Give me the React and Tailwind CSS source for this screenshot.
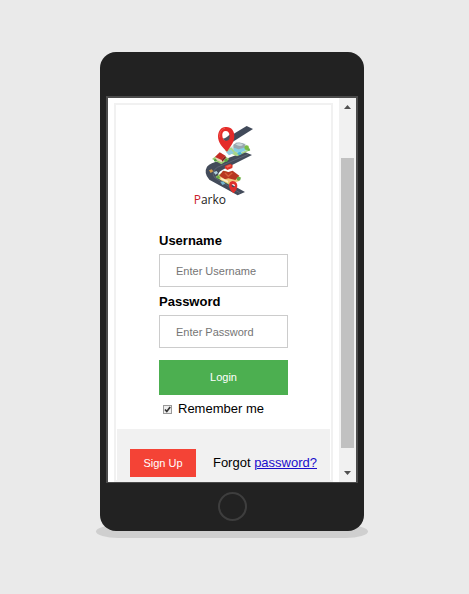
function Logo() {
  return (
    <svg className="mx-auto block h-[100px] w-[80px]" viewBox="-4 0 240 300" role="img" aria-label="Parko">
      <path d="M184 33 L203 42 L138 83 L118 73 Z" fill="#414a5a" />
      <path d="M178 111 L200 120 L112 164 Q92 174 102 188 L179 231 L157 241 L72 194 Q54 174 65 155 Q76 143 102 139 Z" fill="#434b5a" />
      <path d="M188 118 L96 157 Q76 170 88 188 L164 234" fill="none" stroke="#687080" strokeWidth="2" />
      <path d="M118 107 L149 90 L196 105 L155 124 Z" fill="#a9d68a" />
      <path d="M137 97 L153 81 L181 86 L190 102 L160 117 Z" fill="#d7e3e6" />
      <path d="M144 89 Q160 76 179 88 L178 103 Q160 112 145 103 Z" fill="#98a6ae" />
      <path d="M150 88 Q162 81 174 89 Q164 97 150 88" fill="#c8d6da" />
      <path d="M146 98 L160 103 L181 97 V106 L161 115 L146 108 Z" fill="#83cee3" />
      <circle cx="184" cy="98" r="7" fill="#79bd42" />
      <circle cx="190" cy="104" r="4" fill="#6db64a" />
      <path d="M122 111 L137 104 L146 114 L131 121 Z" fill="#8fcbe0" />
      <path d="M155 114 L165 110 L170 116 L161 121 Z" fill="#46b5d7" />
      <path d="M80 132 L105 113 L132 132 L108 148 Z" fill="#9aca70" />
      <path d="M90 125 L105 114 L121 123 V136 L108 142 L92 134 Z" fill="#e9d5bb" />
      <path d="M89 126 L103 112 L120 122 L109 135 Z" fill="#c52b25" />
      <path d="M109 135 L120 122 L122 129 L111 140 Z" fill="#7e211e" />
      <circle cx="90" cy="136" r="4" fill="#4e9c43" />
      <circle cx="122" cy="136" r="5" fill="#56a33f" />
      <path d="M90 186 L118 167 L168 188 L134 211 Z" fill="#9bcc62" />
      <path d="M102 183 L122 171 L162 184 V198 L133 208 L104 194 Z" fill="#f0c77b" />
      <path d="M102 182 L113 167 L129 171 L142 167 L162 182 L150 195 L129 190 L119 193 Z" fill="#b83822" />
      <path d="M119 174 L129 184 L141 173" fill="none" stroke="#d5603a" strokeWidth="4" />
      <path d="M107 188 L128 197 V203 L108 194 Z" fill="#fff0c5" />
      <circle cx="160" cy="191" r="6" fill="#62a844" />
      <circle cx="99" cy="187" r="4" fill="#65ad42" />
      <path d="M71 166 L79 163 L84 169 L76 174 Z" fill="#d49a45" />
      <path d="M85 171 L94 168 L98 174 L90 179 Z" fill="#b2d2de" />
      <path d="M105 201 L114 199 L120 206 L111 210 Z" fill="#74b4cc" />
      <path d="M118 153 L135 146 L142 151 L141 159 L126 165 L119 160 Z" fill="#db3329" />
      <path d="M122 153 L135 149 L138 153 L126 158 Z" fill="#ef6a5c" />
      <path d="M111 70 Q121 72 135 56 Q136 75 125 79 Q117 80 111 70" fill="#4b5260" />
      <path fillRule="evenodd" d="M120 36 C137 34 148 47 147 65 C146 83 134 96 125 110 C111 97 98 83 98 64 C99 47 107 37 120 36 Z M121 48 C113 48 110 54 111 63 C112 73 117 78 124 77 C131 76 134 70 133 62 C132 53 128 48 121 48 Z" fill="#e42b29" />
      <path d="M103 66 C102 52 108 42 118 40" fill="none" stroke="#f6554d" strokeWidth="3" strokeLinecap="round" />
      <path fillRule="evenodd" d="M142 198 Q156 199 156 213 Q156 224 145 235 Q131 223 131 212 Q131 199 142 198 Z M143 207 Q138 208 139 213 Q140 217 145 217 Q149 216 149 212 Q148 207 143 207 Z" fill="#df302c" />
      <text x="25" y="267" fontSize="36" className="font-['Open_Sans',sans-serif]">
        <tspan fill="#c9202b">P</tspan>
        <tspan fill="#1c1c1c">arko</tspan>
      </text>
    </svg>
  );
}

function Field({ id, label, type, placeholder }) {
  return (
    <div>
      <label htmlFor={id} className="block h-5 text-[13px] leading-[14px] font-bold">{label}</label>
      <input
        id={id}
        type={type}
        placeholder={placeholder}
        className="mb-2 block h-[33px] w-full border border-[#ccc] bg-white px-4 text-[11px] outline-none placeholder:text-[#757575]"
      />
    </div>
  );
}

function ScrollBar() {
  return (
    <div className="flex w-[17px] shrink-0 flex-col items-center bg-[#f1f1f1]" aria-hidden="true">
      <svg className="h-[17px] w-[17px] shrink-0" viewBox="0 0 17 17"><path d="M5 11 L8.5 7 L12 11 Z" fill="#505050" /></svg>
      <div className="h-[43px] shrink-0" />
      <div className="w-[13px] grow bg-[#c1c1c1]" />
      <div className="h-[17px] shrink-0" />
      <svg className="h-[17px] w-[17px] shrink-0" viewBox="0 0 17 17"><path d="M5 6 L8.5 10 L12 6 Z" fill="#505050" /></svg>
    </div>
  );
}

function LoginForm() {
  return (
    <form className="mx-[6px] mt-[5px] grow border-2 border-[#f1f1f1] px-px" onSubmit={(e) => e.preventDefault()}>
      <div className="pt-[10px] pb-[19px]">
        <Logo />
      </div>
      <div className="px-[42px]">
        <Field id="username" label="Username" type="text" placeholder="Enter Username" />
        <Field id="password" label="Password" type="password" placeholder="Enter Password" />
        <button type="submit" className="mt-3 block h-[35px] w-full bg-[#4caf50] text-[11px] text-white">Login</button>
        <label className="flex h-[34px] items-center gap-[6px] pb-[6px] pl-1 text-[13px]">
          <span className="relative flex">
            <input type="checkbox" defaultChecked className="peer h-[9px] w-[9px] appearance-none border border-[#999] bg-[#eee]" />
            <svg className="pointer-events-none absolute inset-0 hidden h-[9px] w-[9px] peer-checked:block" viewBox="0 0 9 9">
              <path d="M2 4.5 L3.8 6.5 L7.2 2" fill="none" stroke="#333" strokeWidth="1.7" />
            </svg>
          </span>
          Remember me
        </label>
      </div>
      <div className="flex h-[80px] items-start justify-between bg-[#f1f1f1] px-[13px] pt-5">
        <button type="button" className="h-7 w-[66px] bg-[#f44336] text-[11px] text-white">Sign Up</button>
        <span className="text-[13px] leading-7">Forgot <a href="#password" className="text-[#1a0dcc] underline">password?</a></span>
      </div>
    </form>
  );
}

export default function App() {
  return (
    <main className="min-h-screen bg-[#eaeaea] pt-[52px] pr-[105px] pb-16 pl-[100px] font-['Liberation_Sans',Arial,sans-serif] text-black">
      <div className="relative isolate">
        <div className="absolute -inset-x-1 -bottom-[7px] -z-10 h-[13px] rounded-[24px/7px] bg-[#cfcfcf]" />
        <div className="rounded-2xl bg-[#222] px-[6px] pt-11">
          <div className="flex h-[387px] overflow-hidden border-2 border-b border-[#4b4b4b] bg-white">
            <LoginForm />
            <ScrollBar />
          </div>
          <div className="flex h-12 items-center justify-center pb-[2px]">
            <button type="button" aria-label="Home" className="h-[29px] w-[29px] rounded-full border-2 border-[#3e3e3e]" />
          </div>
        </div>
      </div>
    </main>
  );
}
